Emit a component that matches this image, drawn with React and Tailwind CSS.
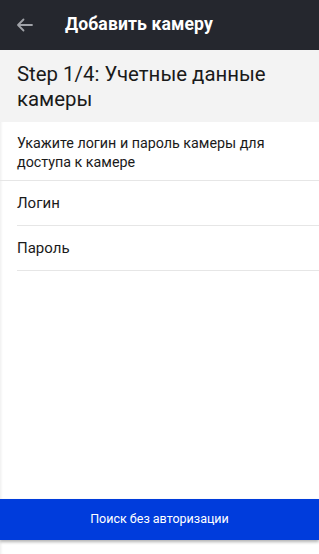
import React from "react";

export default function App() {
  const font = { fontFamily: "Roboto, 'Noto Sans', sans-serif" };
  return (
    <div style={font} className="w-[319px] h-[554px] bg-white flex flex-col overflow-hidden relative">
      <div className="h-[50px] bg-[#25272e] flex items-center shrink-0">
        <div className="w-[65px] pl-[16px] flex items-center">
          <svg width="17" height="14" viewBox="0 0 17 14" fill="none" stroke="#a0a2a8" strokeWidth="1.8" strokeLinecap="round" strokeLinejoin="round">
            <path d="M16 7H2M7.5 1.5L2 7l5.5 5.5" />
          </svg>
        </div>
        <span className="text-white text-[17.6px] font-bold leading-none tracking-[0.1px]">Добавить камеру</span>
      </div>
      <div className="bg-[#f3f3f3] px-[17px] pt-[12px] pb-[10px] shrink-0">
        <div className="text-[20.4px] leading-[25px] text-[#1a1a1a]">Step 1/4: Учетные данные камеры</div>
      </div>
      <div className="flex-1 flex flex-col shadow-[inset_3px_0_3px_-2px_rgba(0,0,0,0.08)]">
        <div className="px-[17px] pt-[12px] pb-[8px] border-b border-[#e6e6e6] text-[14.3px] leading-[19px] text-[#1a1a1a]">
          Укажите логин и пароль камеры для доступа к камере
        </div>
        <div className="pl-[17px]">
          <div className="h-[45px] flex items-center border-b border-[#e6e6e6] text-[15px] text-[#1a1a1a]">Логин</div>
          <div className="h-[45px] flex items-center border-b border-[#e6e6e6] text-[15px] text-[#1a1a1a]">Пароль</div>
        </div>
        <div className="flex-1" />
        <button className="h-[41px] mb-[14px] w-full bg-[#003cdc] text-white text-[12.5px] shadow-[0_2px_3px_rgba(0,0,0,0.3)] flex items-center justify-center">
          Поиск без авторизации
        </button>
      </div>
    </div>
  );
}
